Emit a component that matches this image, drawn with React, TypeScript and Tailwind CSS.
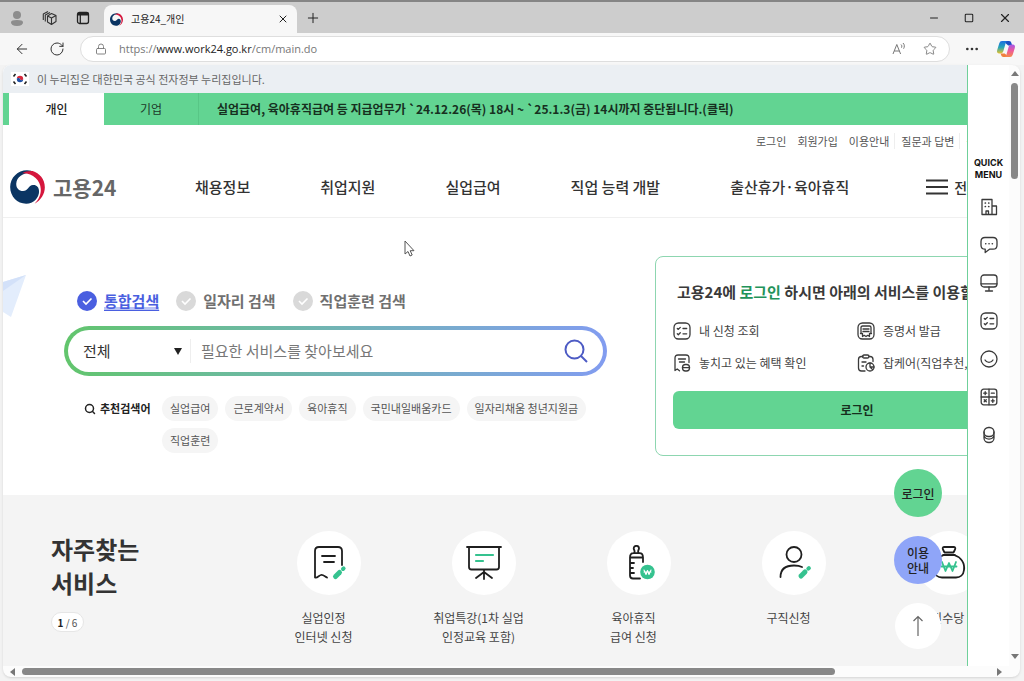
import React from "react";
import {
  ArrowLeft,
  Lock,
  Minus,
  MoreHorizontal,
  Plus,
  RotateCw,
  Search,
  Square,
  Star,
  X,
} from "lucide-react";

const mainMenu = ["채용정보", "취업지원", "실업급여", "직업 능력 개발", "출산휴가·육아휴직"];
const searchTypes = ["통합검색", "일자리 검색", "직업훈련 검색"];
const keywords = ["실업급여", "근로계약서", "육아휴직", "국민내일배움카드", "일자리채움 청년지원금", "직업훈련"];

const services = [
  { lines: ["실업인정", "인터넷 신청"], icon: <DocumentIcon /> },
  { lines: ["취업특강(1차 실업", "인정교육 포함)"], icon: <BoardIcon /> },
  { lines: ["육아휴직", "급여 신청"], icon: <BottleIcon /> },
  { lines: ["구직신청"], icon: <PersonIcon /> },
  { lines: ["취업촉진수당 신청"], icon: <MoneyBagIcon /> },
];

const loginServices = [
  { label: "내 신청 조회", icon: <ChecklistIcon /> },
  { label: "증명서 발급", icon: <CertificateIcon /> },
  { label: "놓치고 있는 혜택 확인", icon: <BenefitIcon /> },
  { label: "잡케어(직업추천, 경력)", icon: <JobCareIcon /> },
];

const quickMenu = [
  { label: "기관", icon: <BuildingIcon /> },
  { label: "상담", icon: <ChatIcon /> },
  { label: "온라인", icon: <MonitorIcon /> },
  { label: "신청 조회", icon: <ChecklistIcon /> },
  { label: "만족도", icon: <SmileIcon /> },
  { label: "계산기", icon: <CalculatorIcon /> },
  { label: "지원금", icon: <CoinsIcon /> },
];

function GovLogo({ className }: { className?: string }) {
  return (
    <svg viewBox="0 0 102 100" className={className} aria-hidden="true">
      <path
        fill="#0b3563"
        d="M62 2C30-6 0 18 0 50c0 28 21 49 47 49 22 0 38-18 38-36 0-13-8-20-18-19-13 1-15 18-29 18-13 0-21-10-20-22C19 19 40 7 62 8z"
      />
      <path fill="#d5173d" d="M34 10C44 4 58 2 66 3c20 6 36 24 36 48 0 20-12 39-30 48 12-12 19-27 18-43C89 30 66 8 34 10z" />
    </svg>
  );
}

function TaegukFlag() {
  return (
    <svg viewBox="0 0 18 14" className="h-3.5 w-4.5" aria-hidden="true">
      <rect width="18" height="14" fill="#fff" />
      <path d="M5.800 7a3.200 3.200 0 0 1 6.400 0c0 1.500-3.200 1.500-3.200 0S5.800 5.500 5.800 7z" fill="#d8283c" />
      <path d="M12.200 7a3.200 3.200 0 0 1-6.400 0c0-1.500 3.200-1.500 3.200 0s3.200 1.500 3.200 0z" fill="#1f4fa3" />
      <g stroke="#222" strokeWidth="1.600">
        <path d="M2.500 4.500 4.500 2M13.500 2l2 2.500M2.500 9.500l2 2.500M13.500 12l2-2.500" />
      </g>
    </svg>
  );
}

function CopilotIcon() {
  return (
    <svg viewBox="0 0 20 20" className="size-5" aria-hidden="true">
      <defs>
        <linearGradient id="cpLeft" x1="0" y1="0" x2="0" y2="1">
          <stop offset="0" stopColor="#1b6fe0" />
          <stop offset=".5" stopColor="#25a5b8" />
          <stop offset="1" stopColor="#e8c22a" />
        </linearGradient>
        <linearGradient id="cpRight" x1="0" y1="0" x2="0" y2="1">
          <stop offset="0" stopColor="#a457e8" />
          <stop offset=".5" stopColor="#ee5a9a" />
          <stop offset="1" stopColor="#f58a4a" />
        </linearGradient>
      </defs>
      <path fill="#1a4fc4" d="M7 2h6c1.500 0 2 .8 2.400 2l.8 2.500h-4z" />
      <path fill="url(#cpLeft)" d="M6 2h5.500c-1 .3-1.500 1-1.900 2.200L7.400 12c-.5 1.600-1.200 2.500-2.900 2.500H3.300C1.300 14.500.6 13 1.200 11l2-6.500C3.800 2.800 4.600 2 6 2z" />
      <path fill="#f0803c" d="M13 18H7.500c-1.500 0-2-.8-2.400-2l-.5-1.500h4z" />
      <path fill="url(#cpRight)" d="M14 18H8.500c1-.3 1.500-1 1.900-2.200L12.600 8c.5-1.600 1.200-2.500 2.900-2.500h1.200c2 0 2.700 1.500 2.100 3.500l-2 6.500C16.200 17.200 15.400 18 14 18z" />
    </svg>
  );
}

/* 18px 라인 아이콘 공통 틀 */
function LineIcon({ children }: { children: React.ReactNode }) {
  return (
    <svg
      viewBox="0 0 18 18"
      className="size-4.5 shrink-0"
      fill="none"
      stroke="#3a3a3a"
      strokeWidth="1.300"
      strokeLinecap="round"
      strokeLinejoin="round"
      aria-hidden="true"
    >
      {children}
    </svg>
  );
}

function ChecklistIcon() {
  return (
    <LineIcon>
      <rect x="1" y="1" width="16" height="16" rx="4.500" />
      <path d="m4.300 6.500 1 .9 2-2M4.300 11.800l1 .9 2-2M10 6.500h3.700M10 11.800h3.700" />
    </LineIcon>
  );
}

function CertificateIcon() {
  return (
    <LineIcon>
      <rect x="1" y="1" width="16" height="16" rx="4.500" />
      <path d="M4 11.500V5.500C4 4.700 4.500 4 5.500 4h7c1 0 1.500.7 1.500 1.500v6M3.500 11.500h2v3l1.700-1.200L9 14.500l1.800-1.200 1.700 1.200v-3h2M6 7h6M6 9.500h6" />
    </LineIcon>
  );
}

function BenefitIcon() {
  return (
    <LineIcon>
      <path d="M16 8.500V4c0-2-1-3-3-3H5C3 1 2 2 2 4v12.500l2.200-1.500 2.300 1.800M5.500 5h7M6.500 8h5" />
      <rect x="9.500" y="10.500" width="7" height="6.500" rx="3" />
      <path d="M9.500 13.700h7" />
    </LineIcon>
  );
}

function JobCareIcon() {
  return (
    <LineIcon>
      <path d="M6 2.500H4.500C2.800 2.500 1.500 3.500 1.500 5.500V14c0 2 1 3 3 3H8M12 2.500h1c1.800 0 3 1 3 3v2" />
      <rect x="5.500" y="1" width="6.500" height="3" rx="1.500" />
      <path d="M5 8h4M5 12h1.500" />
      <circle cx="13" cy="13" r="4" />
      <path d="M13 9v4l2.500 2.500M13 13h4" />
    </LineIcon>
  );
}

function BuildingIcon() {
  return (
    <LineIcon>
      <path d="M2 16.500V1.500h10v15zM12 8h4.500v8.500H12M6 16.500V13h2.500v3.500" />
      <path d="M5.300 5h.1M8.700 5h.1M5.300 8.500h.1M8.700 8.500h.1" strokeWidth="1.700" />
    </LineIcon>
  );
}

function ChatIcon() {
  return (
    <LineIcon>
      <path d="M5 1.500h8c2.700 0 4 1.300 4 4v3.700c0 2.700-1.300 4-4 4H9.500L5.200 16.500v-3.300C2.300 13.200 1 12 1 9.200V5.500c0-2.700 1.300-4 4-4z" />
      <path d="M5.700 7.800h.1M9 7.800h.1M12.300 7.800h.1" strokeWidth="1.600" />
    </LineIcon>
  );
}

function MonitorIcon() {
  return (
    <LineIcon>
      <rect x="1" y="1" width="16" height="12" rx="3" />
      <path d="M1 9.800h16M9 13v3.700M5.500 17h7" />
    </LineIcon>
  );
}

function SmileIcon() {
  return (
    <LineIcon>
      <circle cx="9" cy="9" r="8" />
      <path d="M5 10c1.800 3.200 6.200 3.200 8 0" />
    </LineIcon>
  );
}

function CalculatorIcon() {
  return (
    <LineIcon>
      <rect x="1.200" y="1.200" width="15.600" height="15.600" rx="2.500" />
      <path d="M9 1.200v15.600M1.200 9h15.600M3.700 5.200h3M5.200 3.700v3M11.300 5.200h3M4.200 11.700l2.100 2.100M6.300 11.700l-2.100 2.100M11.300 12.800h3M12.800 11.200v3.200" />
    </LineIcon>
  );
}

function CoinsIcon() {
  return (
    <LineIcon>
      <rect x="4" y="1.500" width="10" height="9" rx="4.500" />
      <path d="M4 6v6c0 6 10 6 10 0V6M4 9c1 5.500 9 5.500 10 0" />
    </LineIcon>
  );
}

function ServiceIcon({ children }: { children: React.ReactNode }) {
  return (
    <svg
      viewBox="0 0 36 36"
      className="size-9"
      fill="none"
      stroke="#1f1f1f"
      strokeWidth="1.800"
      strokeLinecap="round"
      strokeLinejoin="round"
      aria-hidden="true"
    >
      {children}
    </svg>
  );
}

function DocumentIcon() {
  return (
    <ServiceIcon>
      <path d="M31 20V6c0-3-1.500-4-4-4H8C5.500 2 4 3 4 6v26.500c2 1 4-2 6-2.500s4 1.500 6 2.500M11 11h13M13 17h10" />
      <path d="m24.500 31.500 4-4" stroke="#35c28f" strokeWidth="5" />
      <path d="m32 24 .6-.6" stroke="#35c28f" strokeWidth="4" />
    </ServiceIcon>
  );
}

function BoardIcon() {
  return (
    <ServiceIcon>
      <path d="M1 2h34M3 2v20c0 2 1 2.500 2.500 2.500h25c1.500 0 2.500-.5 2.500-2.500V2M18 24.500V34M18 27l-8 6M18 27l8 6" />
      <path d="M10 10h17M10 16h7" stroke="#35c28f" strokeWidth="2.200" />
    </ServiceIcon>
  );
}

function BottleIcon() {
  return (
    <ServiceIcon>
      <path d="M13 8c1.500-1.500 0-3-.3-4.500C12.700 0 18 0 18 3.500 17.700 5 16.200 6.500 17.700 8M9 12.500c0-3 1-4.300 3.500-4.300h6C21 8.200 22 9.500 22 12.500zM9 12.500v18c0 2 1 3 3 3h7M22 12.500V17M9 18h4M9 23h3M9 28h4" />
      <circle cx="26.500" cy="27" r="7.300" fill="#35c28f" stroke="none" />
      <path d="m23 25 2 4.500 1.500-4 1.500 4 2-4.500M23 27h7" stroke="#fff" strokeWidth="1.100" />
    </ServiceIcon>
  );
}

function PersonIcon() {
  return (
    <ServiceIcon>
      <circle cx="18" cy="9.500" r="7.500" />
      <path d="M4.500 32c0-8.500 6-11.500 13.500-11.500 3 0 6 .5 8 1.500" />
      <path d="m25 31 4-4" stroke="#35c28f" strokeWidth="5" />
      <path d="m32.300 23.700.6-.6" stroke="#35c28f" strokeWidth="4" />
    </ServiceIcon>
  );
}

function MoneyBagIcon() {
  return (
    <ServiceIcon>
      <path d="M13 2h10c1.500 0 1.500 1.500 1 2.500l-1.500 3h-9L12 4.500C11.500 3.500 11.500 2 13 2zM12 10h12M13 10C6 12 2 18 3 25c.5 5 4 7.500 8 7.500h14c4 0 7.500-2.500 8-7.500 1-7-3-13-10-15" />
      <path d="m11 17 3.500 9 3.500-8 3.500 8 3.500-9M10.500 21.500h15" stroke="#35c28f" />
    </ServiceIcon>
  );
}

function BrowserTabs() {
  return (
    <div className="flex h-[33px] items-center border-t-2 border-[#858585] bg-[#cdcdcd] text-[#222]">
      <div className="flex w-[104px] shrink-0 items-center gap-[17px] self-stretch pl-[9px]">
        <button aria-label="프로필">
          <svg viewBox="0 0 16 16" className="size-4">
            <circle cx="8" cy="5" r="4" fill="#8d8d8d" />
            <path d="M2 12.500C2 10.700 4 10 8 10s6 .7 6 2.500S12 16 8 16s-6-1.700-6-3.500z" fill="#8d8d8d" />
          </svg>
        </button>
        <button aria-label="작업 영역">
          <svg viewBox="0 0 16 16" className="size-4" fill="none" stroke="#333" strokeWidth="1.100" strokeLinejoin="round">
            <path d="m9.500 3.500 4.500 2v6l-4.500 3-4-2.500V6zM5.500 6l4 2 4.500-2.500M9.500 8v6.500M3.300 11.500V5L8 2.500M1.300 10V4L6 1.500" />
          </svg>
        </button>
        <button aria-label="탭 작업">
          <svg viewBox="0 0 16 16" className="size-4" fill="none" stroke="#222" strokeWidth="1.300">
            <rect x="2.500" y="2.500" width="11" height="11" rx="2" />
            <path d="M2.500 4h11" strokeWidth="3" />
            <path d="M5.300 4v9.500" />
          </svg>
        </button>
      </div>
      <div className="flex h-7 w-[193px] items-center self-end rounded-t-lg bg-[#f7f7f7] pr-2 pl-1.5">
        <GovLogo className="size-[13px]" />
        <span className="ml-2 text-[10px] leading-4">고용24_개인</span>
        <button className="ml-auto" aria-label="탭 닫기">
          <X className="size-3" strokeWidth={2} />
        </button>
      </div>
      <button className="ml-2" aria-label="새 탭">
        <Plus className="size-4" strokeWidth={1.5} />
      </button>
      <div className="ml-auto flex items-center gap-6 pr-3">
        <button aria-label="최소화"><Minus className="size-3" strokeWidth={2} /></button>
        <button aria-label="최대화"><Square className="size-2.5" strokeWidth={2.5} /></button>
        <button aria-label="닫기"><X className="size-3.5" strokeWidth={2} /></button>
      </div>
    </div>
  );
}

function AddressBar() {
  return (
    <div className="flex h-8 items-center bg-[#f7f7f7] pr-2 pl-3.5 text-[#333]">
      <button aria-label="뒤로"><ArrowLeft className="size-4" strokeWidth={1.5} /></button>
      <button className="ml-[19px]" aria-label="새로 고침"><RotateCw className="size-4" strokeWidth={1.5} /></button>
      <div className="ml-[15px] flex h-[26px] flex-1 items-center rounded-full border border-[#dedede] bg-white pr-3 pl-3.5">
        <Lock className="size-3 text-[#777]" strokeWidth={1.8} />
        <a
          href="https://www.work24.go.kr/cm/main.do"
          className="ml-3 font-['Open_Sans',sans-serif] text-[11px] leading-4 text-[#777]"
        >
          https://<span className="text-[#222]">www.work24.go.kr</span>/cm/main.do
        </a>
        <button className="ml-auto" aria-label="소리내어 읽기">
          <svg viewBox="0 0 16 16" className="size-4" fill="none" stroke="#777" strokeWidth="1">
            <path d="m2 13 3.800-9.500L9.600 13M3.300 10h5M10 3.500c1 .8 1 2.200.5 3.200M12 2c1.700 1.500 1.600 4 .6 5.700" />
          </svg>
        </button>
        <button className="ml-4" aria-label="즐겨찾기"><Star className="size-3.5 text-[#777]" strokeWidth={1.5} /></button>
      </div>
      <button className="ml-3.5" aria-label="설정"><MoreHorizontal className="size-4" strokeWidth={2} /></button>
      <button className="ml-4" aria-label="Copilot"><CopilotIcon /></button>
    </div>
  );
}

function SiteHeader() {
  return (
    <header className="border-b border-[#f0f0f0]">
      <div className="flex h-7 items-center gap-2 bg-[#ebeff3] pl-2 text-[11px] text-[#666]">
        <TaegukFlag />
        <span>이 누리집은 대한민국 공식 전자정부 누리집입니다.</span>
      </div>

      <div className="flex h-8 bg-[#62d492] pl-1.5 text-xs text-[#1d3a2a]">
        <a href="#personal" className="flex w-[95px] items-center justify-center bg-white font-medium text-[#222]">개인</a>
        <a href="#company" className="flex w-[95px] items-center justify-center border-r border-[#58c686]">기업</a>
        <a href="#notice" className="ml-[18px] flex items-center font-bold text-[#17301f]">
          실업급여, 육아휴직급여 등 지급업무가 `24.12.26(목) 18시 ~ `25.1.3(금) 14시까지 중단됩니다.(클릭)
        </a>
      </div>

      <div className="flex h-8 items-center gap-[11px] pl-[753px] text-[11px] text-[#555]">
        <a href="#login">로그인</a>
        <a href="#join">회원가입</a>
        <a href="#guide">이용안내</a>
        <a href="#qna" className="-ml-1.5 border-l border-[#eee] pl-1.5">질문과 답변</a>
        <a href="#remote" className="-ml-1.5 border-l border-[#eee] pl-1.5">원격지원</a>
      </div>

      <div className="flex h-15 items-center pl-[7px]">
        <a href="#home" className="flex w-[185px] items-center gap-2">
          <GovLogo className="h-[34px] w-[35px]" />
          <span className="text-[21px] leading-8 font-bold text-[#666]">고용24</span>
        </a>
        <nav className="flex gap-[70px] text-[15px] font-medium text-[#333]">
          {mainMenu.map((menu) => (
            <a key={menu} href="#menu">{menu}</a>
          ))}
        </nav>
        <button className="ml-[77px] flex items-center gap-1.5 text-sm font-medium text-[#333]">
          <svg viewBox="0 0 22 16" className="h-4 w-[22px]" stroke="#333" strokeWidth="2" aria-hidden="true">
            <path d="M0 1.500h22M0 8h22M0 14.500h22" />
          </svg>
          전체메뉴
        </button>
      </div>
    </header>
  );
}

function SearchArea() {
  const [type, setType] = React.useState("통합검색");

  return (
    <div className="w-[543px] pt-[35px]">
      <div className="flex h-5 items-center gap-[17px] pl-[13px]">
        {searchTypes.map((name) => (
          <label key={name} className="relative flex items-center gap-[7px] text-[15px] leading-5 font-bold">
            <input
              type="radio"
              name="searchType"
              className="sr-only"
              checked={type === name}
              onChange={() => setType(name)}
            />
            <svg viewBox="0 0 20 20" className="size-5" fill="none" aria-hidden="true">
              <circle cx="10" cy="10" r="10" fill={type === name ? "#4a5fe0" : "#d9d9d9"} />
              <path d="m6 10 3 3 5.500-5.500" stroke="#fff" strokeWidth="1.600" />
            </svg>
            <span className={type === name ? "bg-linear-to-t from-[#b9c3f5] from-20% to-transparent to-20% text-[#4a5fe0] underline underline-offset-3" : "text-[#707070]"}>
              {name}
            </span>
          </label>
        ))}
      </div>

      <div className="mt-[15px] rounded-full bg-linear-to-r from-[#62c56c] to-[#829cf0] p-1">
        <form className="flex h-[42px] items-center rounded-full bg-white pr-[15px] pl-[15px]" onSubmit={(e) => e.preventDefault()}>
          <div className="flex w-[108px] items-center border-r border-[#eee] pr-2">
            <select aria-label="검색 범위" className="flex-1 appearance-none text-[15px] leading-6 text-[#333] outline-none">
              <option>전체</option>
            </select>
            <svg viewBox="0 0 8 7" className="h-[7px] w-2" aria-hidden="true"><path d="M0 0h8L4 7z" fill="#222" /></svg>
          </div>
          <input
            type="text"
            aria-label="검색어"
            placeholder="필요한 서비스를 찾아보세요"
            className="min-w-0 flex-1 pl-2.5 text-[15px] leading-6 outline-none placeholder:text-[#777]"
          />
          <button aria-label="검색">
            <svg viewBox="0 0 24 24" className="size-6" fill="none" stroke="#4d5bc4" strokeWidth="2" aria-hidden="true">
              <circle cx="10.500" cy="10.500" r="9" />
              <path d="m17 17 6 6" />
            </svg>
          </button>
        </form>
      </div>

      <div className="mt-5 flex">
        <div className="flex h-[25px] w-[98px] shrink-0 items-center gap-1 pl-5 text-[11px] font-bold text-[#222]">
          <Search className="size-3" strokeWidth={3} />
          추천검색어
        </div>
        <ul className="flex flex-wrap gap-[7px] text-[11px] text-[#555]">
          {keywords.map((keyword) => (
            <li key={keyword}>
              <a href="#keyword" className="flex h-[25px] items-center rounded-full bg-[#f5f5f5] px-2">{keyword}</a>
            </li>
          ))}
        </ul>
      </div>
    </div>
  );
}

function LoginCard() {
  return (
    <div className="h-[200px] w-[404px] shrink-0 rounded-lg border border-[#8dd6b0] px-[17px] pt-[23px]">
      <h2 className="pl-1 text-[15px] leading-6 font-bold whitespace-nowrap text-[#3a3a3a]">
        고용24에 <span className="text-[#22935a]">로그인</span> 하시면 아래의 서비스를 이용할 수 있습니다.
      </h2>
      <ul className="mt-[17px] grid grid-cols-2 gap-y-3 text-xs leading-5 text-[#444]">
        {loginServices.map((item) => (
          <li key={item.label} className="flex items-center gap-2">
            {item.icon}
            <a href="#service" className="whitespace-nowrap">{item.label}</a>
          </li>
        ))}
      </ul>
      <button className="mt-[18px] h-[38px] w-full rounded-md bg-[#62d492] text-xs font-bold text-[#17301f]">로그인</button>
    </div>
  );
}

function FrequentServices() {
  return (
    <section className="flex flex-1 bg-[#f4f4f4] pl-12">
      <div className="w-[200px] shrink-0 pt-[37px]">
        <h2 className="text-2xl leading-[34px] font-bold text-[#333]">자주찾는<br />서비스</h2>
        <div className="mt-3 flex h-5 w-[33px] items-center justify-center rounded-full border border-[#e6e6e6] bg-white text-[10px] text-[#555]">
          <b className="text-[#222]">1</b>&nbsp;/ 6
        </div>
      </div>
      <ul className="flex pt-9 pb-4">
        {services.map((service) => (
          <li key={service.lines[0]} className="w-[155px]">
            <a href="#service" className="flex flex-col items-center">
              <span className="flex size-16 items-center justify-center rounded-full bg-white">{service.icon}</span>
              <span className="mt-[13px] pr-2.5 text-center text-xs leading-[19px] text-[#444]">
                {service.lines.map((line) => (
                  <span key={line} className="block whitespace-nowrap">{line}</span>
                ))}
              </span>
            </a>
          </li>
        ))}
      </ul>
    </section>
  );
}

function FloatingButtons() {
  return (
    <div className="absolute right-[25px] bottom-[17px] flex flex-col items-center gap-[19px] text-xs leading-[15px] font-medium text-[#222]">
      <button className="size-12 rounded-full bg-[#62d492]">로그인</button>
      <button className="size-12 rounded-full bg-[#8fa5f8]">이용<br />안내</button>
      <button className="flex size-[46px] items-center justify-center rounded-full bg-white" aria-label="맨 위로">
        <svg viewBox="0 0 12 22" className="h-[22px] w-3" fill="none" stroke="#666" strokeWidth="1.200" aria-hidden="true">
          <path d="M6 21V1.500M1.500 6 6 1.500 10.500 6" />
        </svg>
      </button>
    </div>
  );
}

function QuickMenu() {
  return (
    <aside className="flex w-[42px] shrink-0 flex-col items-center border-l border-[#6fd09a] bg-white pt-[92px]">
      <h2 className="text-center font-[Inter,sans-serif] text-[9px] leading-3 font-bold text-[#111]">QUICK<br />MENU</h2>
      <ul className="mt-[17px] flex flex-col gap-5">
        {quickMenu.map((item) => (
          <li key={item.label}>
            <a href="#quick" aria-label={item.label} className="block">{item.icon}</a>
          </li>
        ))}
      </ul>
    </aside>
  );
}

function Arrow({ path }: { path: string }) {
  return (
    <svg viewBox="0 0 8 8" className="size-2 shrink-0" fill="#777" aria-hidden="true">
      <path d={path} />
    </svg>
  );
}

export default function App() {
  return (
    <div className="flex min-h-screen flex-col bg-[#f3f3f3] font-['Noto_Sans_CJK_KR',sans-serif]">
      <BrowserTabs />
      <AddressBar />
      <div className="mr-1 mb-1 ml-[3px] flex flex-1 flex-col overflow-hidden rounded-lg bg-[#fcfcfc] shadow-sm">
        <div className="flex flex-1">
          <div className="relative flex min-w-0 flex-1 overflow-hidden bg-white">
            <div className="flex w-[1150px] shrink-0 flex-col">
              <SiteHeader />
              <section className="flex gap-12 pt-[38px] pb-[39px] pl-[61px]">
                <SearchArea />
                <LoginCard />
              </section>
              <FrequentServices />
            </div>
            <svg viewBox="0 0 24 44" className="absolute top-[209px] left-0 h-11 w-6" aria-hidden="true">
              <path d="M0 8 23 1 8 43 0 38z" fill="#e3edfc" />
              <path d="M0 8 23 1 0 17z" fill="#d3e1f9" />
            </svg>
            <svg viewBox="0 0 12 18" className="absolute top-[175px] left-[401px] h-[18px] w-3" aria-hidden="true">
              <path d="M1 1v13l3-2.500 2 4.500 2.200-1-2-4.300H10z" fill="#fff" stroke="#555" />
            </svg>
            <FloatingButtons />
          </div>
          <QuickMenu />
          <div className="flex w-[11px] shrink-0 flex-col items-center pt-[5px] pb-1.5">
            <Arrow path="M0 6h8L4 1z" />
            <div className="mt-[5px] h-24 w-[7px] rounded-full bg-[#888]" />
            <span className="flex-1" />
            <Arrow path="M0 2h8L4 7z" />
          </div>
        </div>
        <div className="flex h-[11px] items-center pr-[17px] pl-1.5">
          <Arrow path="M6 0v8L1 4z" />
          <div className="mx-[5px] flex-1">
            <div className="h-[7px] w-[84%] rounded-full bg-[#888]" />
          </div>
          <Arrow path="M2 0v8l5-4z" />
        </div>
      </div>
    </div>
  );
}
